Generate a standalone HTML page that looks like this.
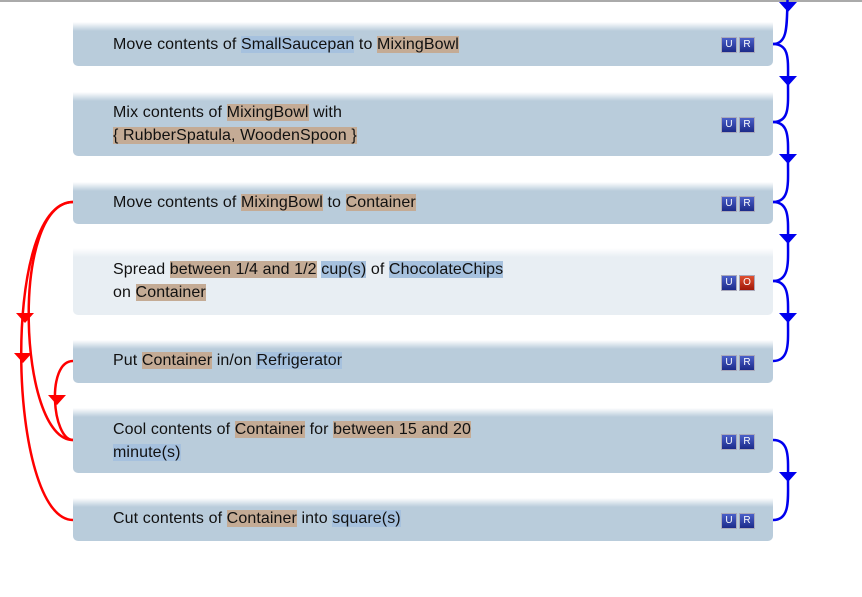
<!DOCTYPE html>
<html><head><meta charset="utf-8"><style>
body{margin:0;width:862px;height:597px;background:#fff;position:relative;overflow:hidden;font-family:"Liberation Sans",sans-serif;font-size:16px;letter-spacing:0.1px;color:#111}
.top{position:absolute;left:0;top:0;width:862px;height:2px;background:#aaa}
.b{position:absolute;left:73px;width:700px;background:linear-gradient(#fff 0px,#b9ccdb 9px,#b9ccdb);border-radius:0 0 5px 5px}
.b.l{background:linear-gradient(#fff 0px,#e8eef3 9px,#e8eef3)}
.t{position:absolute;left:40px;line-height:23px;white-space:nowrap}
.o{background:#c4ab95}.u{background:#a6c1de}
.btn{position:absolute;top:50%;margin-top:-7px;width:14px;height:14px;color:#fff;font-size:10px;letter-spacing:0;text-align:center;line-height:14px;background:linear-gradient(#4a5fc8,#1c2a8a);border:1px solid #aab}
.btn.r{background:linear-gradient(#e05030,#a01808)}
svg{position:absolute;left:0;top:0}
</style></head><body>
<div class="top"></div>
<div class="b" style="top:22px;height:44px"><div class="t" style="top:11px">Move contents of <span class="u">SmallSaucepan</span> to <span class="o">MixingBowl</span></div><div class="btn" style="left:648px">U</div><div class="btn" style="left:666px">R</div></div>
<div class="b" style="top:92px;height:64px"><div class="t" style="top:9px">Mix contents of <span class="o">MixingBowl</span> with<br><span class="o">{ RubberSpatula, WoodenSpoon }</span></div><div class="btn" style="left:648px">U</div><div class="btn" style="left:666px">R</div></div>
<div class="b" style="top:182px;height:42px"><div class="t" style="top:9px">Move contents of <span class="o">MixingBowl</span> to <span class="o">Container</span></div><div class="btn" style="left:648px">U</div><div class="btn" style="left:666px">R</div></div>
<div class="b l" style="top:248px;height:67px"><div class="t" style="top:10px">Spread <span class="o">between 1/4 and 1/2</span> <span class="u">cup(s)</span> of <span class="u">ChocolateChips</span><br>on <span class="o">Container</span></div><div class="btn" style="left:648px">U</div><div class="btn r" style="left:666px">O</div></div>
<div class="b" style="top:340px;height:43px"><div class="t" style="top:9px">Put <span class="o">Container</span> in/on <span class="u">Refrigerator</span></div><div class="btn" style="left:648px">U</div><div class="btn" style="left:666px">R</div></div>
<div class="b" style="top:408px;height:65px"><div class="t" style="top:10px">Cool contents of <span class="o">Container</span> for <span class="o">between 15 and 20</span><br><span class="u">minute(s)</span></div><div class="btn" style="left:648px">U</div><div class="btn" style="left:666px">R</div></div>
<div class="b" style="top:498px;height:43px"><div class="t" style="top:9px">Cut contents of <span class="o">Container</span> into <span class="u">square(s)</span></div><div class="btn" style="left:648px">U</div><div class="btn" style="left:666px">R</div></div>
<svg width="862" height="597">
<g fill="none" stroke="#0000ee" stroke-width="2.5">
<path d="M773,44 C790,44 786,20 788,-10"/>
<path d="M773,44 C790,44 788,60 788,83 C788,106 790,122 773,122"/>
<path d="M773,122 C790,122 788,140 788,162 C788,184 790,202 773,202"/>
<path d="M773,202 C790,202 788,220 788,241 C788,262 790,281 773,281"/>
<path d="M773,281 C790,281 788,300 788,321 C788,342 790,361 773,361"/>
<path d="M773,440 C790,440 788,458 788,480 C788,500 790,520 773,520"/>
</g>
<g fill="#0000ee">
<path d="M779,2 L797,2 L788,12Z"/><path d="M779,76 L797,76 L788,86Z"/><path d="M779,154 L797,154 L788,164Z"/><path d="M779,234 L797,234 L788,244Z"/><path d="M779,313 L797,313 L788,323Z"/><path d="M779,472 L797,472 L788,482Z"/>
</g>
<g fill="none" stroke="#ff0000" stroke-width="2.5">
<path d="M73,202 C10,202 18,440 73,440"/>
<path d="M73,202 C0,202 8,520 73,520"/>
<path d="M73,361 C46,361 52,440 73,440"/>
</g>
<g fill="#ff0000">
<path d="M16,313 L34,313 L25,323Z"/><path d="M14,353 L32,353 L23,363Z"/><path d="M48,395 L66,395 L57,405Z"/>
</g>
</svg>
</body></html>
